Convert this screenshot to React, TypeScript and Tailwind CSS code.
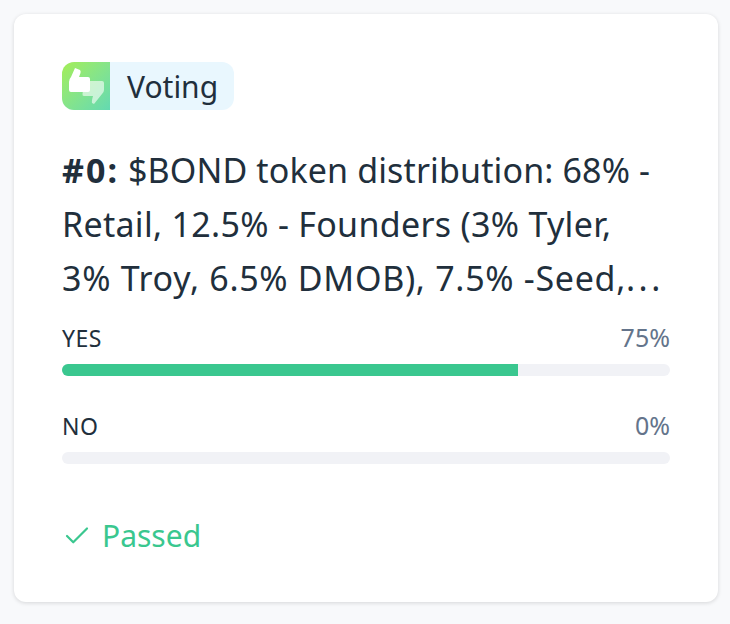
import { Check } from "lucide-react";

function VoteRow({ label, value, width }: { label: string; value: string; width: string }) {
  return (
    <div>
      <div className="flex items-center justify-between h-[28px]">
        <span className="text-[23px] tracking-[0.5px] text-[#212f3c]">{label}</span>
        <span className="text-[25px] text-[#64748b]">{value}</span>
      </div>
      <div className="mt-[12px] h-[12px] rounded-full bg-[#f1f2f6] overflow-hidden">
        <div className={`h-full bg-[#3ac78f] ${width}`} />
      </div>
    </div>
  );
}

export default function App() {
  return (
    <div className="h-[624px] w-[730px] bg-[#f8f9fb] p-[14px] font-['Noto_Sans',sans-serif]">
      <div className="h-[588px] w-[704px] rounded-[12px] bg-white px-[48px] pt-[48px] shadow-[0_1px_4px_rgba(0,0,0,0.14)]">
        <div className="inline-flex h-[48px] items-center overflow-hidden rounded-[12px] bg-[#e9f7fe]">
          <div className="h-[48px] w-[48px] bg-gradient-to-br from-[#a4ee52] to-[#63d9b1]">
            <svg width="48" height="48" viewBox="0 0 48 48">
              <path d="M22 19 H40 Q42 19 42 21 V28 Q42 30 40 32 L32 42 L30 41 Q29.5 39 31 34 H22 Q20 34 20.5 32 Z" fill="#fff" fillOpacity="0.6" />
              <path d="M13 6 L18 8 Q19 9 18.5 11 L17 15 L26 15 Q28 15 28 17 L28 28 Q28 30 26 30 L9 30 Q7 30 7 28 L7 20 Q7 17 9 15 Z" fill="#fff" />
            </svg>
          </div>
          <span className="pl-[17px] pr-[16px] text-[30px] text-[#212f3c]">Voting</span>
        </div>
        <p className="mt-[27px] text-[34px] leading-[54px] whitespace-nowrap text-[#212f3c]">
          <span className="tracking-[0.13px]">
            <b className="font-bold tracking-[2px]">#0:</b> $BOND token distribution: 68% -
          </span>
          <br />
          <span className="tracking-[0.3px]">Retail, 12.5% - Founders (3% Tyler,</span>
          <br />
          <span className="tracking-[0.7px]">
            3% Troy, 6.5% DMOB), 7.5% -Seed,<span className="tracking-[3.5px]">...</span>
          </span>
        </p>
        <div className="mt-[19px] flex flex-col gap-[36px]">
          <VoteRow label="YES" value="75%" width="w-[75%]" />
          <VoteRow label="NO" value="0%" width="w-0" />
        </div>
        <div className="mt-[52px] flex items-center gap-[10px] text-[#3ac78f]">
          <Check size={30} strokeWidth={1.75} />
          <span className="text-[30px] leading-[40px]">Passed</span>
        </div>
      </div>
    </div>
  );
}
